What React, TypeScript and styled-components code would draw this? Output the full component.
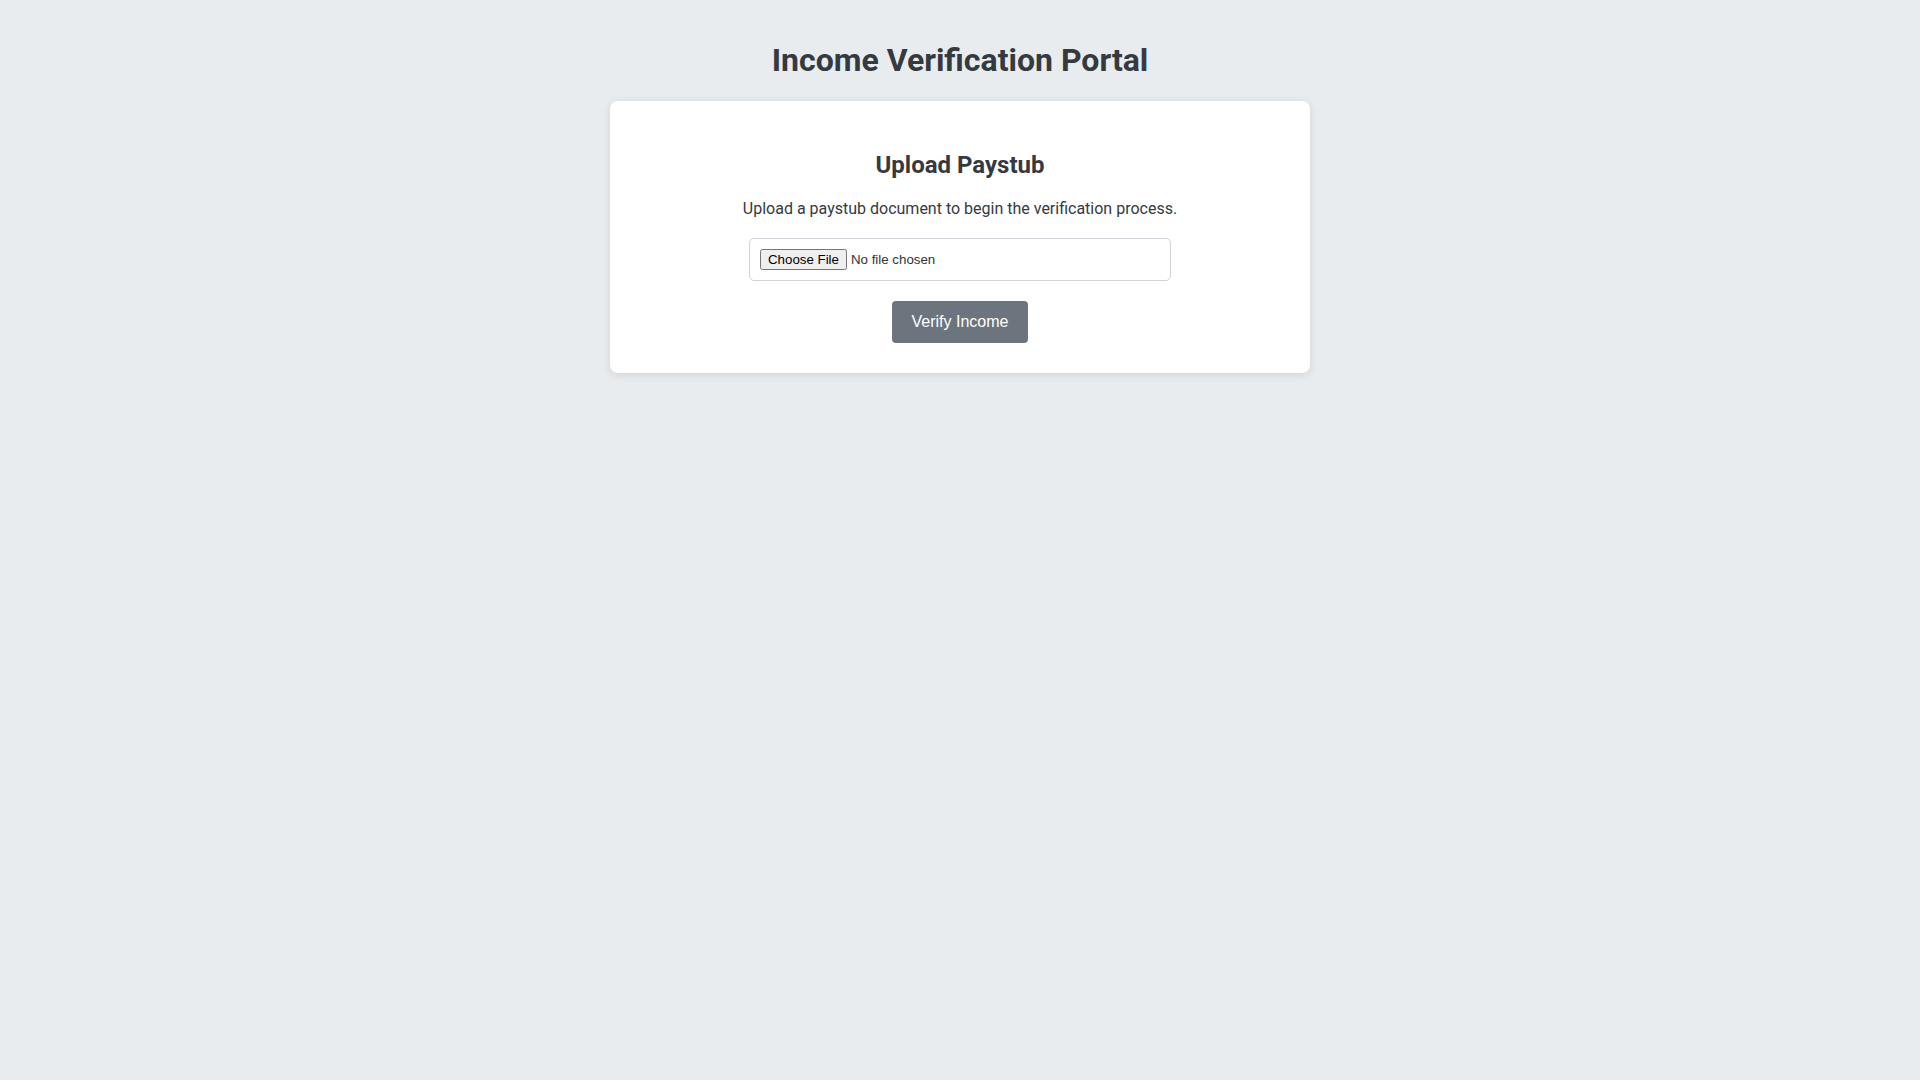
import styled, { createGlobalStyle } from "styled-components";

const GlobalStyle = createGlobalStyle`
  html, body {
    margin: 0;
    padding: 0;
    background-color: #e9ecef;
  }
  body {
    font-family: Roboto, "Liberation Sans", Arial, sans-serif;
    color: #343a40;
    min-height: 100vh;
  }
`;

const App = () => {
  return (
    <>
      <GlobalStyle />
      <Page>
        <PageTitle>Income Verification Portal</PageTitle>
        <Card>
          <CardTitle>Upload Paystub</CardTitle>
          <Description>
            Upload a paystub document to begin the verification process.
          </Description>
          <FileInput type="file" accept=".pdf,.png,.jpg" />
          <VerifyButton disabled>Verify Income</VerifyButton>
        </Card>
      </Page>
    </>
  );
};

export default App;

const Page = styled.div`
  display: flex;
  flex-direction: column;
  align-items: center;
  padding: 20px;
`;

const PageTitle = styled.h1`
  font-size: 32px;
  font-weight: 700;
  line-height: 37.5px;
  margin: 21.5px 0 22px;
  color: #343a40;
`;

const Card = styled.div`
  display: flex;
  flex-direction: column;
  align-items: center;
  box-sizing: border-box;
  width: 700px;
  padding: 30px;
  background-color: #fff;
  border-radius: 8px;
  box-shadow: 0 2px 10px rgba(0, 0, 0, 0.1);
`;

const CardTitle = styled.h2`
  font-size: 24px;
  font-weight: 700;
  line-height: 28px;
  margin: 20px 0 20px;
  color: #343a40;
`;

const Description = styled.p`
  font-size: 16px;
  line-height: 19px;
  margin: 0 0 20px;
  color: #343a40;
`;

const FileInput = styled.input`
  box-sizing: border-box;
  width: 422px;
  height: 43px;
  padding: 10px;
  border: 1px solid #ced4da;
  border-radius: 5px;
  font-family: "Liberation Sans", Arial, sans-serif;
  font-size: 13.3px;
  color: #333;
  margin-bottom: 20px;
`;

const VerifyButton = styled.button`
  box-sizing: border-box;
  height: 42px;
  padding: 0 20px;
  border: none;
  border-radius: 4px;
  background-color: #6c757d;
  color: #fff;
  font-family: "Liberation Sans", Arial, sans-serif;
  font-size: 16px;
  cursor: not-allowed;
`;
